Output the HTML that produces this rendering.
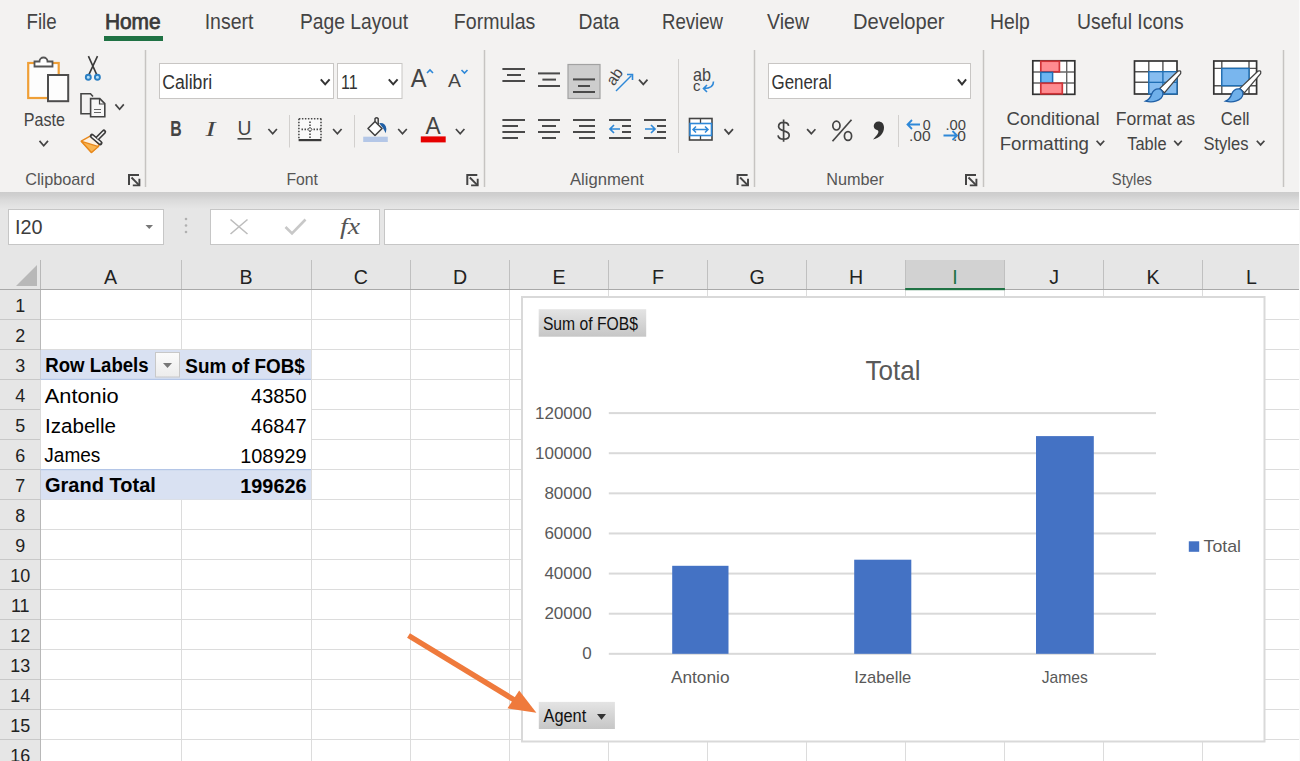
<!DOCTYPE html>
<html><head><meta charset="utf-8"><title>Excel</title>
<style>
*{margin:0;padding:0}
html,body{width:1300px;height:761px;overflow:hidden;background:#fff;font-family:"Liberation Sans",sans-serif;position:relative}

</style></head><body>
<svg width="1300" height="761" viewBox="0 0 1300 761" style="position:absolute;left:0;top:0;font-family:'Liberation Sans',sans-serif"><rect x="0" y="0" width="1300" height="192" fill="#f3f2f1"/>
<rect x="0" y="192" width="1300" height="68" fill="#e6e6e6"/>
<defs><linearGradient id="shd" x1="0" y1="0" x2="0" y2="1"><stop offset="0" stop-color="#cccccc"/><stop offset="0.2" stop-color="#d0d0d0"/><stop offset="0.5" stop-color="#dbdbdb"/><stop offset="0.8" stop-color="#e2e2e2"/><stop offset="1" stop-color="#e6e6e6"/></linearGradient></defs>
<rect x="0" y="192" width="1300" height="17" fill="url(#shd)"/>
<text x="26.50" y="29.00" font-size="21.80" font-weight="normal" fill="#444444" textLength="30.13" lengthAdjust="spacingAndGlyphs">File</text>
<text x="104.90" y="29.00" font-size="21.37" font-weight="normal" fill="#3a3a3a" textLength="55.75" lengthAdjust="spacingAndGlyphs" stroke="#3a3a3a" stroke-width="0.75">Home</text>
<text x="204.70" y="29.00" font-size="21.80" font-weight="normal" fill="#444444" textLength="48.72" lengthAdjust="spacingAndGlyphs">Insert</text>
<text x="300.00" y="29.00" font-size="21.80" font-weight="normal" fill="#444444" textLength="108.02" lengthAdjust="spacingAndGlyphs">Page Layout</text>
<text x="453.80" y="29.00" font-size="21.80" font-weight="normal" fill="#444444" textLength="81.55" lengthAdjust="spacingAndGlyphs">Formulas</text>
<text x="578.50" y="29.00" font-size="21.80" font-weight="normal" fill="#444444" textLength="40.85" lengthAdjust="spacingAndGlyphs">Data</text>
<text x="662.00" y="29.00" font-size="21.80" font-weight="normal" fill="#444444" textLength="60.98" lengthAdjust="spacingAndGlyphs">Review</text>
<text x="767.00" y="29.00" font-size="21.80" font-weight="normal" fill="#444444" textLength="41.99" lengthAdjust="spacingAndGlyphs">View</text>
<text x="853.00" y="29.00" font-size="21.80" font-weight="normal" fill="#444444" textLength="91.57" lengthAdjust="spacingAndGlyphs">Developer</text>
<text x="990.00" y="29.00" font-size="21.80" font-weight="normal" fill="#444444" textLength="39.83" lengthAdjust="spacingAndGlyphs">Help</text>
<text x="1077.00" y="29.00" font-size="21.80" font-weight="normal" fill="#444444" textLength="106.65" lengthAdjust="spacingAndGlyphs">Useful Icons</text>
<rect x="104" y="36" width="59" height="5" fill="#1f7244"/>
<text x="25.20" y="185.30" font-size="15.99" font-weight="normal" fill="#555" textLength="69.61" lengthAdjust="spacingAndGlyphs">Clipboard</text>
<text x="286.40" y="185.30" font-size="15.99" font-weight="normal" fill="#555" textLength="31.52" lengthAdjust="spacingAndGlyphs">Font</text>
<text x="570.00" y="185.30" font-size="15.99" font-weight="normal" fill="#555" textLength="73.93" lengthAdjust="spacingAndGlyphs">Alignment</text>
<text x="826.20" y="185.30" font-size="15.99" font-weight="normal" fill="#555" textLength="57.83" lengthAdjust="spacingAndGlyphs">Number</text>
<text x="1111.80" y="185.30" font-size="15.99" font-weight="normal" fill="#555" textLength="40.17" lengthAdjust="spacingAndGlyphs">Styles</text>
<line x1="145.5" y1="50" x2="145.5" y2="187" stroke="#c6c4c2" stroke-width="1.5"/>
<line x1="484.5" y1="50" x2="484.5" y2="187" stroke="#c6c4c2" stroke-width="1.5"/>
<line x1="754.5" y1="50" x2="754.5" y2="187" stroke="#c6c4c2" stroke-width="1.5"/>
<line x1="983.5" y1="50" x2="983.5" y2="187" stroke="#c6c4c2" stroke-width="1.5"/>
<line x1="1283.5" y1="50" x2="1283.5" y2="187" stroke="#c6c4c2" stroke-width="1.5"/>
<path d="M129.0 185.0 V175.0 H139.0" fill="none" stroke="#444" stroke-width="2"/><path d="M131.5 177.5 L139.3 185.3" stroke="#444" stroke-width="1.9"/><path d="M132.8 185.4 H139.4 V178.8" fill="none" stroke="#444" stroke-width="1.9"/>
<path d="M467.3 185.0 V175.0 H477.3" fill="none" stroke="#444" stroke-width="2"/><path d="M469.8 177.5 L477.6 185.3" stroke="#444" stroke-width="1.9"/><path d="M471.1 185.4 H477.7 V178.8" fill="none" stroke="#444" stroke-width="1.9"/>
<path d="M737.6 185.0 V175.0 H747.6" fill="none" stroke="#444" stroke-width="2"/><path d="M740.1 177.5 L747.9 185.3" stroke="#444" stroke-width="1.9"/><path d="M741.4 185.4 H748.0 V178.8" fill="none" stroke="#444" stroke-width="1.9"/>
<path d="M966.0 185.0 V175.0 H976.0" fill="none" stroke="#444" stroke-width="2"/><path d="M968.5 177.5 L976.3 185.3" stroke="#444" stroke-width="1.9"/><path d="M969.8 185.4 H976.4 V178.8" fill="none" stroke="#444" stroke-width="1.9"/>
<rect x="28.2" y="63" width="30.5" height="35" fill="#fdfdfd" stroke="#ef9f37" stroke-width="2.2"/>
<path d="M34.5 66.5 V61.5 H39.5 A4 4 0 0 1 47.5 61.5 H52.5 V66.5 Z" fill="#fff" stroke="#555" stroke-width="1.8"/>
<rect x="48" y="75" width="20.2" height="26.2" fill="#fdfdfd" stroke="#4d4d4d" stroke-width="2"/>
<text x="23.80" y="125.60" font-size="17.44" font-weight="normal" fill="#444" textLength="41.14" lengthAdjust="spacingAndGlyphs">Paste</text>
<path d="M39.5 140.9 L43.7 145.7 L48.0 140.9" fill="none" stroke="#444" stroke-width="1.7"/>
<path d="M88.4 56.2 L96.6 74.4 M97.5 56.2 L89 74.4" stroke="#3a3a3a" stroke-width="1.6" fill="none"/>
<circle cx="88.3" cy="77.3" r="2.5" fill="#b5e2fb" stroke="#2b7fc3" stroke-width="1.9"/>
<circle cx="97.4" cy="77.3" r="2.5" fill="#b5e2fb" stroke="#2b7fc3" stroke-width="1.9"/>
<path d="M90.5 113.8 H81 V93.8 H90.5 L93 96.5" fill="none" stroke="#444" stroke-width="1.6"/>
<path d="M90.6 98.6 H99.8 L104.8 103.6 V116.8 H90.6 Z" fill="#f7f7f7" stroke="#444" stroke-width="1.6"/>
<path d="M99.5 99 V104 H104.5" fill="none" stroke="#444" stroke-width="1.2"/>
<path d="M94 109.5 H101 M94 112.5 H101" stroke="#666" stroke-width="1"/>
<path d="M115.4 104.4 L119.6 109.2 L123.8 104.4" fill="none" stroke="#444" stroke-width="1.7"/>
<path d="M81.2 141.2 L91 135.6 L99.3 145 L91.4 152.6 Z" fill="#fdf1e2" stroke="#e8891c" stroke-width="1.4" stroke-linejoin="round"/>
<path d="M81.6 141.4 L98.6 146.6 L91.4 152.4 Z" fill="#f9b450" stroke="#e8891c" stroke-width="1.3" stroke-linejoin="round"/>
<path d="M92 135.9 L100.3 143.1 M97.6 138.2 L103.9 131.8" stroke="#3a3a3a" stroke-width="4.6" stroke-linecap="round"/>
<path d="M92.4 136.3 L99.9 142.7 M97.8 138 L103.7 132" stroke="#f6f6f6" stroke-width="1.6" stroke-linecap="round"/>
<rect x="159.5" y="63.5" width="174" height="35" fill="#fff" stroke="#c8c6c4"/>
<text x="162.20" y="89.30" font-size="20.35" font-weight="normal" fill="#333" textLength="49.98" lengthAdjust="spacingAndGlyphs">Calibri</text>
<path d="M320.8 79.3 L325.2 84.3 L329.6 79.3" fill="none" stroke="#333" stroke-width="2"/>
<rect x="337.5" y="63.5" width="64.5" height="35" fill="#fff" stroke="#c8c6c4"/>
<text x="340.90" y="89.30" font-size="20.35" font-weight="normal" fill="#333" textLength="16.67" lengthAdjust="spacingAndGlyphs">11</text>
<path d="M388.8 79.3 L393.2 84.3 L397.6 79.3" fill="none" stroke="#333" stroke-width="2"/>
<text x="410.70" y="86.70" font-size="25.73" font-weight="normal" fill="#444" textLength="15.83" lengthAdjust="spacingAndGlyphs">A</text>
<path d="M427 73 L430 70 L433 73" fill="none" stroke="#2e88d8" stroke-width="1.6"/>
<text x="448.00" y="86.70" font-size="18.46" font-weight="normal" fill="#444" textLength="12.94" lengthAdjust="spacingAndGlyphs">A</text>
<path d="M461.5 70 L464.5 73 L467.5 70" fill="none" stroke="#2e88d8" stroke-width="1.6"/>
<text x="170.30" y="136.20" font-size="21.37" font-weight="bold" fill="#444" textLength="11.43" lengthAdjust="spacingAndGlyphs">B</text>
<text x="205.5" y="136.2" style="font-family:'Liberation Serif';font-style:italic" font-size="21" fill="#444" textLength="10" lengthAdjust="spacingAndGlyphs">I</text>
<text x="237.60" y="135.20" font-size="20.35" font-weight="normal" fill="#444" textLength="13.94" lengthAdjust="spacingAndGlyphs">U</text>
<rect x="237.5" y="138" width="14" height="1.6" fill="#444"/>
<path d="M268.4 129.0 L272.7 133.8 L276.9 129.0" fill="none" stroke="#444" stroke-width="1.7"/>
<line x1="289.5" y1="115" x2="289.5" y2="147.5" stroke="#d2d0ce"/>
<rect x="299" y="119" width="22" height="20.5" fill="#fafafa"/>
<path d="M298.9 118.8 H321.5 M298.9 118.8 V139 M321 118.8 V139 M310 121.5 V139 M301.5 129.4 H321" stroke="#4a4a4a" stroke-width="1.6" stroke-dasharray="1.5 1.5" fill="none"/>
<path d="M310 127.4 L312 129.4 L310 131.4 L308 129.4 Z" fill="#fafafa" stroke="#555" stroke-width="1"/>
<rect x="298.6" y="139" width="22.8" height="2.2" fill="#3a3a3a"/>
<path d="M333.1 129.0 L337.4 133.8 L341.6 129.0" fill="none" stroke="#444" stroke-width="1.7"/>
<line x1="354.5" y1="115" x2="354.5" y2="147.5" stroke="#d2d0ce"/>
<path d="M375 121.5 L368 128.5 L375 135.5 L382 128.5 Z" fill="#fff" stroke="#444" stroke-width="1.6" stroke-linejoin="round"/>
<path d="M375 121.5 V118.8 Q376.6 116.6 378.2 118.8 V124.7" fill="none" stroke="#444" stroke-width="1.5"/>
<path d="M379.2 123.2 Q385.6 122.4 386.4 129 L385.8 133.2 Q384 130 382.6 127.6 Z" fill="#1f5fa5"/>
<rect x="363.2" y="136.7" width="24.6" height="5.3" fill="#b4c7e7"/>
<path d="M398.2 129.0 L402.5 133.8 L406.8 129.0" fill="none" stroke="#444" stroke-width="1.7"/>
<text x="425.40" y="134.20" font-size="24.71" font-weight="normal" fill="#444" textLength="15.13" lengthAdjust="spacingAndGlyphs">A</text>
<rect x="420.8" y="136.4" width="24.9" height="6" fill="#e60000"/>
<path d="M455.9 129.0 L460.2 133.8 L464.4 129.0" fill="none" stroke="#444" stroke-width="1.7"/>
<rect x="502.4" y="68.0" width="22.6" height="2.0" fill="#4a4a4a"/><rect x="507.0" y="74.0" width="14.0" height="2.0" fill="#4a4a4a"/><rect x="502.4" y="80.0" width="22.6" height="2.0" fill="#4a4a4a"/>
<rect x="538.0" y="72.4" width="22.0" height="2.0" fill="#4a4a4a"/><rect x="542.4" y="78.6" width="13.6" height="2.0" fill="#4a4a4a"/><rect x="538.0" y="85.0" width="22.0" height="2.0" fill="#4a4a4a"/>
<rect x="568" y="64.5" width="32" height="34" fill="#cdcdcd" stroke="#a2a2a2" stroke-width="1.2"/>
<rect x="573.0" y="78.4" width="22.0" height="2.0" fill="#4a4a4a"/><rect x="578.0" y="85.0" width="12.0" height="2.0" fill="#4a4a4a"/><rect x="573.0" y="91.0" width="22.0" height="2.0" fill="#4a4a4a"/>
<text x="0" y="0" font-size="15.5" fill="#444" transform="translate(614 86.5) rotate(-55)" textLength="17" lengthAdjust="spacingAndGlyphs">ab</text>
<path d="M616 91 L631.5 75.5" stroke="#2e88d8" stroke-width="1.5"/><path d="M627 74.5 H632.5 V80" fill="none" stroke="#2e88d8" stroke-width="1.6"/>
<path d="M639.0 79.6 L643.3 84.4 L647.5 79.6" fill="none" stroke="#444" stroke-width="1.7"/>
<line x1="678.5" y1="59" x2="678.5" y2="153" stroke="#d2d0ce"/>
<text x="693.00" y="80.50" font-size="17.44" font-weight="normal" fill="#444" textLength="18.04" lengthAdjust="spacingAndGlyphs">ab</text>
<text x="693.00" y="91.00" font-size="15.00" font-weight="normal" fill="#444" textLength="7.50" lengthAdjust="spacingAndGlyphs">c</text>
<path d="M713.5 81.5 Q713.5 88.5 704 88.5 M707 85 L703.5 88.5 L707 92" fill="none" stroke="#2e88d8" stroke-width="1.6"/>
<rect x="502.4" y="119.0" width="22.6" height="2.0" fill="#4a4a4a"/><rect x="502.4" y="125.0" width="15.6" height="2.0" fill="#4a4a4a"/><rect x="502.4" y="131.0" width="22.6" height="2.0" fill="#4a4a4a"/><rect x="502.4" y="137.0" width="15.6" height="2.0" fill="#4a4a4a"/>
<rect x="538.0" y="119.0" width="22.0" height="2.0" fill="#4a4a4a"/><rect x="542.0" y="125.0" width="14.0" height="2.0" fill="#4a4a4a"/><rect x="538.0" y="131.0" width="22.0" height="2.0" fill="#4a4a4a"/><rect x="542.0" y="137.0" width="14.0" height="2.0" fill="#4a4a4a"/>
<rect x="573.0" y="119.0" width="22.0" height="2.0" fill="#4a4a4a"/><rect x="579.0" y="125.0" width="16.0" height="2.0" fill="#4a4a4a"/><rect x="573.0" y="131.0" width="22.0" height="2.0" fill="#4a4a4a"/><rect x="579.0" y="137.0" width="16.0" height="2.0" fill="#4a4a4a"/>
<rect x="609.0" y="119.0" width="22.0" height="2.0" fill="#4a4a4a"/><rect x="622.0" y="125.0" width="9.0" height="2.0" fill="#4a4a4a"/><rect x="622.0" y="131.0" width="9.0" height="2.0" fill="#4a4a4a"/><rect x="609.0" y="137.0" width="22.0" height="2.0" fill="#4a4a4a"/>
<path d="M620 129 H610 M614 125 L610 129 L614 133" fill="none" stroke="#2e88d8" stroke-width="1.7"/>
<rect x="644.0" y="119.0" width="22.0" height="2.0" fill="#4a4a4a"/><rect x="657.0" y="125.0" width="9.0" height="2.0" fill="#4a4a4a"/><rect x="657.0" y="131.0" width="9.0" height="2.0" fill="#4a4a4a"/><rect x="644.0" y="137.0" width="22.0" height="2.0" fill="#4a4a4a"/>
<path d="M645 129 H655 M651 125 L655 129 L651 133" fill="none" stroke="#2e88d8" stroke-width="1.7"/>
<rect x="689.5" y="118.5" width="22.5" height="21.5" fill="#fff" stroke="#444" stroke-width="1.6"/>
<path d="M700.5 118.5 V123 M700.5 135.5 V140" stroke="#444" stroke-width="1.3"/>
<rect x="690" y="123.5" width="21.5" height="12" fill="#fff" stroke="#2e88d8" stroke-width="1.6"/>
<path d="M693 129.5 H708 M696 126.5 L693 129.5 L696 132.5 M705 126.5 L708 129.5 L705 132.5" fill="none" stroke="#2e88d8" stroke-width="1.5"/>
<path d="M724.5 129.1 L728.7 133.9 L733.0 129.1" fill="none" stroke="#444" stroke-width="1.7"/>
<rect x="768.5" y="63.5" width="202" height="35" fill="#fff" stroke="#c8c6c4"/>
<text x="771.50" y="88.60" font-size="19.33" font-weight="normal" fill="#333" textLength="60.16" lengthAdjust="spacingAndGlyphs">General</text>
<path d="M957.9 79.3 L962.0 84.3 L966.1 79.3" fill="none" stroke="#333" stroke-width="2"/>
<path d="M788.6 125.8 C788.3 123.5 786.3 122.4 783.6 122.4 C780.6 122.4 778.6 124 778.6 126.6 C778.6 132.2 789.2 129.6 789.2 135.2 C789.2 137.8 787.1 139.2 783.6 139.2 C780.5 139.2 778.4 138 778 135.4 M783.6 119.6 V141.8" fill="none" stroke="#444" stroke-width="1.7"/>
<path d="M807.1 129.2 L811.3 133.7 L815.4 129.2" fill="none" stroke="#444" stroke-width="1.7"/>
<ellipse cx="836.4" cy="125.6" rx="3.6" ry="4.4" fill="none" stroke="#444" stroke-width="1.7"/><ellipse cx="848" cy="136" rx="3.6" ry="4.4" fill="none" stroke="#444" stroke-width="1.7"/><path d="M832.5 141.3 L851.5 119.8" stroke="#444" stroke-width="1.7"/>
<path d="M878.5 121.5 C873 121.5 872 129 877 130 C879 130.5 879 133 876 136 L873 139.5 C880 138 884 133 884 127.5 C884 123.5 881.5 121.5 878.5 121.5 Z" fill="#333"/>
<line x1="898.5" y1="115" x2="898.5" y2="147" stroke="#d2d0ce"/>
<text x="922.80" y="129.50" font-size="15.26" font-weight="normal" fill="#444" textLength="7.92" lengthAdjust="spacingAndGlyphs">0</text>
<text x="909.00" y="141.20" font-size="15.26" font-weight="normal" fill="#444" textLength="21.70" lengthAdjust="spacingAndGlyphs">.00</text>
<path d="M920 124.5 H907.5 M912 120 L907.5 124.5 L912 129" fill="none" stroke="#2e88d8" stroke-width="1.8"/>
<text x="945.50" y="129.50" font-size="15.26" font-weight="normal" fill="#444" textLength="20.50" lengthAdjust="spacingAndGlyphs">.00</text>
<text x="953.00" y="141.20" font-size="15.26" font-weight="normal" fill="#444" textLength="12.98" lengthAdjust="spacingAndGlyphs">.0</text>
<path d="M943.5 135.5 H957 M952.5 131 L957 135.5 L952.5 140" fill="none" stroke="#2e88d8" stroke-width="1.8"/>
<rect x="1032.8" y="60.8" width="42" height="33.5" fill="#fff"/>
<path d="M1032.8 72 H1074.8 M1032.8 83 H1074.8 M1066.7 60.8 V94.3" stroke="#666" stroke-width="1.4" fill="none"/>
<rect x="1032.8" y="60.8" width="42" height="33.5" fill="none" stroke="#333" stroke-width="1.7"/>
<rect x="1040.8" y="61.2" width="18.6" height="10.6" fill="#ff8b90" stroke="#d13438" stroke-width="1.7"/>
<rect x="1040.8" y="72.3" width="11.8" height="10.4" fill="#6cb6f3" stroke="#1f6fb5" stroke-width="1.5"/>
<rect x="1040.8" y="83.2" width="21.5" height="10.6" fill="#ff8b90" stroke="#d13438" stroke-width="1.7"/>
<text x="1006.60" y="125.00" font-size="18.90" font-weight="normal" fill="#444" textLength="92.97" lengthAdjust="spacingAndGlyphs">Conditional</text>
<text x="999.70" y="149.50" font-size="18.90" font-weight="normal" fill="#444" textLength="89.29" lengthAdjust="spacingAndGlyphs">Formatting</text>
<path d="M1096.6 140.7 L1100.4 144.9 L1104.2 140.7" fill="none" stroke="#444" stroke-width="1.7"/>
<rect x="1134.5" y="61" width="42.5" height="33" fill="#fff"/>
<path d="M1134.5 71.7 H1177 M1134.5 82.3 H1177 M1148.8 61 V94 M1162.9 61 V94" stroke="#555" stroke-width="1.4" fill="none"/>
<rect x="1134.5" y="61" width="42.5" height="33" fill="none" stroke="#333" stroke-width="1.7"/>
<rect x="1148.8" y="71.7" width="28.2" height="22.3" fill="#79b6ee" fill-opacity="0.9"/>
<path d="M1148.8 71.7 H1177 V94 H1148.8 Z M1148.8 82.3 H1177 M1162.9 71.7 V94" fill="none" stroke="#1f6fb5" stroke-width="1.3"/>
<path d="M1177.8 71.2 Q1181.6 69.8 1180.6 73.6 L1164.4 92.8 L1159.6 88.6 Z" fill="#fff" stroke="#444" stroke-width="1.3" stroke-linejoin="round"/>
<path d="M1160.4 89 Q1165.2 93.5 1161.0 98.2 Q1155.0 103.4 1145.5 101.2 Q1150.0 99.2 1151.6 94.2 Q1154.0 87.8 1160.4 89 Z" fill="#6fb0ea" stroke="#1f5fa5" stroke-width="1.3"/>
<text x="1115.80" y="125.00" font-size="18.90" font-weight="normal" fill="#444" textLength="79.22" lengthAdjust="spacingAndGlyphs">Format as</text>
<text x="1127.30" y="149.50" font-size="18.90" font-weight="normal" fill="#444" textLength="39.21" lengthAdjust="spacingAndGlyphs">Table</text>
<path d="M1174.2 140.7 L1178.0 144.9 L1181.8 140.7" fill="none" stroke="#444" stroke-width="1.7"/>
<rect x="1213.8" y="61" width="42.8" height="33" fill="#fff"/>
<path d="M1213.8 68.4 H1256.6 M1213.8 85.7 H1256.6 M1221.8 61 V94 M1249 61 V94" stroke="#555" stroke-width="1.4" fill="none"/>
<rect x="1213.8" y="61" width="42.8" height="33" fill="none" stroke="#333" stroke-width="1.7"/>
<rect x="1221.8" y="68.4" width="27.2" height="17.3" fill="#79b6ee" stroke="#1f6fb5" stroke-width="1.4"/>
<path d="M1257.8 71.2 Q1261.6 69.8 1260.6 73.6 L1244.4 92.8 L1239.6 88.6 Z" fill="#fff" stroke="#444" stroke-width="1.3" stroke-linejoin="round"/>
<path d="M1240.4 89 Q1245.2 93.5 1241.0 98.2 Q1235.0 103.4 1225.5 101.2 Q1230.0 99.2 1231.6 94.2 Q1234.0 87.8 1240.4 89 Z" fill="#6fb0ea" stroke="#1f5fa5" stroke-width="1.3"/>
<text x="1220.80" y="125.00" font-size="18.90" font-weight="normal" fill="#444" textLength="28.76" lengthAdjust="spacingAndGlyphs">Cell</text>
<text x="1203.50" y="149.50" font-size="18.90" font-weight="normal" fill="#444" textLength="44.97" lengthAdjust="spacingAndGlyphs">Styles</text>
<path d="M1256.8 140.7 L1260.6 144.9 L1264.4 140.7" fill="none" stroke="#444" stroke-width="1.7"/>
<rect x="8.5" y="209.5" width="155" height="35" fill="#fff" stroke="#c6c6c6"/>
<text x="15.10" y="234.40" font-size="20.64" font-weight="normal" fill="#3c3c3c" textLength="27.50" lengthAdjust="spacingAndGlyphs">I20</text>
<path d="M145.5 225 H153 L149.25 229 Z" fill="#777"/>
<circle cx="186" cy="219" r="1.3" fill="#b0b0b0"/><circle cx="186" cy="225.5" r="1.3" fill="#b0b0b0"/><circle cx="186" cy="232" r="1.3" fill="#b0b0b0"/>
<rect x="210.5" y="209.5" width="169" height="35" fill="#fff" stroke="#c6c6c6"/>
<path d="M230.5 219.5 L247.5 234 M247.5 219.5 L230.5 234" stroke="#bdbdbd" stroke-width="1.6"/>
<path d="M285.5 227 L292 233.5 L305.5 219.5" fill="none" stroke="#c8c8c8" stroke-width="2.6"/>
<text x="340" y="234" style="font-family:'Liberation Serif';font-style:italic" font-size="23" fill="#555" textLength="20" lengthAdjust="spacingAndGlyphs">fx</text>
<rect x="384.5" y="209.5" width="930" height="35" fill="#fff" stroke="#c6c6c6"/>
<rect x="0" y="260" width="1300" height="30" fill="#e6e6e6"/>
<rect x="905.2" y="260" width="99.7" height="30" fill="#d2d2d2"/>
<rect x="0" y="290" width="40" height="471" fill="#e6e6e6"/>
<line x1="40" y1="319.5" x2="1300" y2="319.5" stroke="#dcdcdc"/>
<line x1="40" y1="349.5" x2="1300" y2="349.5" stroke="#dcdcdc"/>
<line x1="40" y1="379.5" x2="1300" y2="379.5" stroke="#dcdcdc"/>
<line x1="40" y1="409.5" x2="1300" y2="409.5" stroke="#dcdcdc"/>
<line x1="40" y1="439.5" x2="1300" y2="439.5" stroke="#dcdcdc"/>
<line x1="40" y1="469.5" x2="1300" y2="469.5" stroke="#dcdcdc"/>
<line x1="40" y1="499.5" x2="1300" y2="499.5" stroke="#dcdcdc"/>
<line x1="40" y1="529.5" x2="1300" y2="529.5" stroke="#dcdcdc"/>
<line x1="40" y1="559.5" x2="1300" y2="559.5" stroke="#dcdcdc"/>
<line x1="40" y1="589.5" x2="1300" y2="589.5" stroke="#dcdcdc"/>
<line x1="40" y1="619.5" x2="1300" y2="619.5" stroke="#dcdcdc"/>
<line x1="40" y1="649.5" x2="1300" y2="649.5" stroke="#dcdcdc"/>
<line x1="40" y1="679.5" x2="1300" y2="679.5" stroke="#dcdcdc"/>
<line x1="40" y1="709.5" x2="1300" y2="709.5" stroke="#dcdcdc"/>
<line x1="40" y1="739.5" x2="1300" y2="739.5" stroke="#dcdcdc"/>
<line x1="40" y1="769.5" x2="1300" y2="769.5" stroke="#dcdcdc"/>
<line x1="181.5" y1="290" x2="181.5" y2="761" stroke="#dcdcdc"/>
<line x1="311.5" y1="290" x2="311.5" y2="761" stroke="#dcdcdc"/>
<line x1="410.5" y1="290" x2="410.5" y2="761" stroke="#dcdcdc"/>
<line x1="509.5" y1="290" x2="509.5" y2="761" stroke="#dcdcdc"/>
<line x1="608.5" y1="290" x2="608.5" y2="761" stroke="#dcdcdc"/>
<line x1="707.5" y1="290" x2="707.5" y2="761" stroke="#dcdcdc"/>
<line x1="806.5" y1="290" x2="806.5" y2="761" stroke="#dcdcdc"/>
<line x1="905.5" y1="290" x2="905.5" y2="761" stroke="#dcdcdc"/>
<line x1="1004.5" y1="290" x2="1004.5" y2="761" stroke="#dcdcdc"/>
<line x1="1103.5" y1="290" x2="1103.5" y2="761" stroke="#dcdcdc"/>
<line x1="1202.5" y1="290" x2="1202.5" y2="761" stroke="#dcdcdc"/>
<line x1="0" y1="319.5" x2="40" y2="319.5" stroke="#c8c8c8"/>
<line x1="0" y1="349.5" x2="40" y2="349.5" stroke="#c8c8c8"/>
<line x1="0" y1="379.5" x2="40" y2="379.5" stroke="#c8c8c8"/>
<line x1="0" y1="409.5" x2="40" y2="409.5" stroke="#c8c8c8"/>
<line x1="0" y1="439.5" x2="40" y2="439.5" stroke="#c8c8c8"/>
<line x1="0" y1="469.5" x2="40" y2="469.5" stroke="#c8c8c8"/>
<line x1="0" y1="499.5" x2="40" y2="499.5" stroke="#c8c8c8"/>
<line x1="0" y1="529.5" x2="40" y2="529.5" stroke="#c8c8c8"/>
<line x1="0" y1="559.5" x2="40" y2="559.5" stroke="#c8c8c8"/>
<line x1="0" y1="589.5" x2="40" y2="589.5" stroke="#c8c8c8"/>
<line x1="0" y1="619.5" x2="40" y2="619.5" stroke="#c8c8c8"/>
<line x1="0" y1="649.5" x2="40" y2="649.5" stroke="#c8c8c8"/>
<line x1="0" y1="679.5" x2="40" y2="679.5" stroke="#c8c8c8"/>
<line x1="0" y1="709.5" x2="40" y2="709.5" stroke="#c8c8c8"/>
<line x1="0" y1="739.5" x2="40" y2="739.5" stroke="#c8c8c8"/>
<line x1="0" y1="769.5" x2="40" y2="769.5" stroke="#c8c8c8"/>
<line x1="40.5" y1="260" x2="40.5" y2="761" stroke="#b8b8b8"/>
<line x1="181.5" y1="260" x2="181.5" y2="289" stroke="#c0c0c0"/>
<line x1="311.5" y1="260" x2="311.5" y2="289" stroke="#c0c0c0"/>
<line x1="410.5" y1="260" x2="410.5" y2="289" stroke="#c0c0c0"/>
<line x1="509.5" y1="260" x2="509.5" y2="289" stroke="#c0c0c0"/>
<line x1="608.5" y1="260" x2="608.5" y2="289" stroke="#c0c0c0"/>
<line x1="707.5" y1="260" x2="707.5" y2="289" stroke="#c0c0c0"/>
<line x1="806.5" y1="260" x2="806.5" y2="289" stroke="#c0c0c0"/>
<line x1="905.5" y1="260" x2="905.5" y2="289" stroke="#c0c0c0"/>
<line x1="1004.5" y1="260" x2="1004.5" y2="289" stroke="#c0c0c0"/>
<line x1="1103.5" y1="260" x2="1103.5" y2="289" stroke="#c0c0c0"/>
<line x1="1202.5" y1="260" x2="1202.5" y2="289" stroke="#c0c0c0"/>
<rect x="0" y="289" width="1300" height="1" fill="#a9a9a9"/>
<rect x="905.2" y="288" width="99.7" height="2.2" fill="#1f7244"/>
<path d="M16 286 L37 265 V286 Z" fill="#b8b8b8"/>
<text x="103.93" y="284.30" font-size="21.08" font-weight="normal" fill="#222" textLength="13.07" lengthAdjust="spacingAndGlyphs">A</text>
<text x="239.48" y="284.30" font-size="21.08" font-weight="normal" fill="#222" textLength="13.07" lengthAdjust="spacingAndGlyphs">B</text>
<text x="353.69" y="284.30" font-size="21.08" font-weight="normal" fill="#222" textLength="14.16" lengthAdjust="spacingAndGlyphs">C</text>
<text x="452.94" y="284.30" font-size="21.08" font-weight="normal" fill="#222" textLength="14.16" lengthAdjust="spacingAndGlyphs">D</text>
<text x="552.53" y="284.30" font-size="21.08" font-weight="normal" fill="#222" textLength="13.07" lengthAdjust="spacingAndGlyphs">E</text>
<text x="652.12" y="284.30" font-size="21.08" font-weight="normal" fill="#222" textLength="11.97" lengthAdjust="spacingAndGlyphs">F</text>
<text x="749.51" y="284.30" font-size="21.08" font-weight="normal" fill="#222" textLength="15.25" lengthAdjust="spacingAndGlyphs">G</text>
<text x="848.89" y="284.30" font-size="21.08" font-weight="normal" fill="#222" textLength="14.16" lengthAdjust="spacingAndGlyphs">H</text>
<text x="952.31" y="284.30" font-size="21.08" font-weight="normal" fill="#1f7244" textLength="5.45" lengthAdjust="spacingAndGlyphs">I</text>
<text x="1049.30" y="284.30" font-size="21.08" font-weight="normal" fill="#222" textLength="9.80" lengthAdjust="spacingAndGlyphs">J</text>
<text x="1146.48" y="284.30" font-size="21.08" font-weight="normal" fill="#222" textLength="13.07" lengthAdjust="spacingAndGlyphs">K</text>
<text x="1246.06" y="284.30" font-size="21.08" font-weight="normal" fill="#222" textLength="10.90" lengthAdjust="spacingAndGlyphs">L</text>
<text x="15.32" y="312.30" font-size="18.90" font-weight="normal" fill="#222" textLength="9.98" lengthAdjust="spacingAndGlyphs">1</text>
<text x="15.32" y="342.30" font-size="18.90" font-weight="normal" fill="#222" textLength="9.98" lengthAdjust="spacingAndGlyphs">2</text>
<text x="15.32" y="372.30" font-size="18.90" font-weight="normal" fill="#222" textLength="9.98" lengthAdjust="spacingAndGlyphs">3</text>
<text x="15.32" y="402.30" font-size="18.90" font-weight="normal" fill="#222" textLength="9.98" lengthAdjust="spacingAndGlyphs">4</text>
<text x="15.32" y="432.30" font-size="18.90" font-weight="normal" fill="#222" textLength="9.98" lengthAdjust="spacingAndGlyphs">5</text>
<text x="15.32" y="462.30" font-size="18.90" font-weight="normal" fill="#222" textLength="9.98" lengthAdjust="spacingAndGlyphs">6</text>
<text x="15.32" y="492.30" font-size="18.90" font-weight="normal" fill="#222" textLength="9.98" lengthAdjust="spacingAndGlyphs">7</text>
<text x="15.32" y="522.30" font-size="18.90" font-weight="normal" fill="#222" textLength="9.98" lengthAdjust="spacingAndGlyphs">8</text>
<text x="15.32" y="552.30" font-size="18.90" font-weight="normal" fill="#222" textLength="9.98" lengthAdjust="spacingAndGlyphs">9</text>
<text x="10.34" y="582.30" font-size="18.90" font-weight="normal" fill="#222" textLength="19.97" lengthAdjust="spacingAndGlyphs">10</text>
<text x="10.97" y="612.30" font-size="18.90" font-weight="normal" fill="#222" textLength="18.63" lengthAdjust="spacingAndGlyphs">11</text>
<text x="10.34" y="642.30" font-size="18.90" font-weight="normal" fill="#222" textLength="19.97" lengthAdjust="spacingAndGlyphs">12</text>
<text x="10.34" y="672.30" font-size="18.90" font-weight="normal" fill="#222" textLength="19.97" lengthAdjust="spacingAndGlyphs">13</text>
<text x="10.34" y="702.30" font-size="18.90" font-weight="normal" fill="#222" textLength="19.97" lengthAdjust="spacingAndGlyphs">14</text>
<text x="10.34" y="732.30" font-size="18.90" font-weight="normal" fill="#222" textLength="19.97" lengthAdjust="spacingAndGlyphs">15</text>
<text x="10.34" y="762.30" font-size="18.90" font-weight="normal" fill="#222" textLength="19.97" lengthAdjust="spacingAndGlyphs">16</text>
<rect x="40.5" y="350" width="270.5" height="29.5" fill="#d9e1f2"/>
<rect x="40.5" y="379.5" width="270.5" height="90" fill="#fff"/>
<rect x="40.5" y="469.5" width="270.5" height="30" fill="#d9e1f2"/>
<rect x="40.5" y="378.8" width="270.5" height="1.2" fill="#b4c6e7"/>
<rect x="40.5" y="469" width="270.5" height="1.2" fill="#b4c6e7"/>
<defs><linearGradient id="btn" x1="0" y1="0" x2="0" y2="1"><stop offset="0" stop-color="#fbfbfb"/><stop offset="1" stop-color="#ececec"/></linearGradient><linearGradient id="pbtn" x1="0" y1="0" x2="0" y2="1"><stop offset="0" stop-color="#e4e4e4"/><stop offset="1" stop-color="#c6c6c6"/></linearGradient></defs>
<rect x="155.5" y="352.5" width="24" height="24.5" fill="url(#btn)" stroke="#c8c8c8"/>
<path d="M163 363 H172 L167.5 368 Z" fill="#777"/>
<text x="45.30" y="372.40" font-size="20.35" font-weight="bold" fill="#000" textLength="103.33" lengthAdjust="spacingAndGlyphs">Row Labels</text>
<text x="185.30" y="372.50" font-size="20.35" font-weight="bold" fill="#000" textLength="119.57" lengthAdjust="spacingAndGlyphs">Sum of FOB$</text>
<text x="44.70" y="402.80" font-size="21.08" font-weight="normal" fill="#000" textLength="74.04" lengthAdjust="spacingAndGlyphs">Antonio</text>
<text x="45.00" y="432.70" font-size="21.08" font-weight="normal" fill="#000" textLength="70.94" lengthAdjust="spacingAndGlyphs">Izabelle</text>
<text x="44.30" y="462.20" font-size="21.08" font-weight="normal" fill="#000" textLength="56.11" lengthAdjust="spacingAndGlyphs">James</text>
<text x="45.00" y="492.00" font-size="21.08" font-weight="bold" fill="#000" textLength="110.84" lengthAdjust="spacingAndGlyphs">Grand Total</text>
<text x="251.10" y="403.00" font-size="21.08" font-weight="normal" fill="#000" textLength="55.42" lengthAdjust="spacingAndGlyphs">43850</text>
<text x="251.10" y="433.00" font-size="21.08" font-weight="normal" fill="#000" textLength="55.42" lengthAdjust="spacingAndGlyphs">46847</text>
<text x="240.30" y="463.20" font-size="21.08" font-weight="normal" fill="#000" textLength="66.24" lengthAdjust="spacingAndGlyphs">108929</text>
<text x="240.30" y="492.70" font-size="21.08" font-weight="bold" fill="#000" textLength="66.24" lengthAdjust="spacingAndGlyphs">199626</text>
<rect x="522" y="297" width="742.5" height="444.5" fill="#fff" stroke="#d9d9d9" stroke-width="2"/>
<rect x="538.7" y="309.2" width="107.5" height="27.5" fill="url(#pbtn)"/>
<text x="542.90" y="329.80" font-size="18.60" font-weight="normal" fill="#111" textLength="95.06" lengthAdjust="spacingAndGlyphs">Sum of FOB$</text>
<text x="865.60" y="380.00" font-size="27.03" font-weight="normal" fill="#595959" textLength="55.06" lengthAdjust="spacingAndGlyphs">Total</text>
<rect x="608.8" y="412.10" width="547.2" height="2" fill="#d9d9d9"/>
<text x="534.97" y="418.50" font-size="16.28" font-weight="normal" fill="#595959" textLength="56.77" lengthAdjust="spacingAndGlyphs">120000</text>
<rect x="608.8" y="452.22" width="547.2" height="2" fill="#d9d9d9"/>
<text x="534.97" y="458.62" font-size="16.28" font-weight="normal" fill="#595959" textLength="56.77" lengthAdjust="spacingAndGlyphs">100000</text>
<rect x="608.8" y="492.34" width="547.2" height="2" fill="#d9d9d9"/>
<text x="544.41" y="498.74" font-size="16.28" font-weight="normal" fill="#595959" textLength="47.31" lengthAdjust="spacingAndGlyphs">80000</text>
<rect x="608.8" y="532.46" width="547.2" height="2" fill="#d9d9d9"/>
<text x="544.41" y="538.86" font-size="16.28" font-weight="normal" fill="#595959" textLength="47.31" lengthAdjust="spacingAndGlyphs">60000</text>
<rect x="608.8" y="572.58" width="547.2" height="2" fill="#d9d9d9"/>
<text x="544.41" y="578.98" font-size="16.28" font-weight="normal" fill="#595959" textLength="47.31" lengthAdjust="spacingAndGlyphs">40000</text>
<rect x="608.8" y="612.70" width="547.2" height="2" fill="#d9d9d9"/>
<text x="544.41" y="619.10" font-size="16.28" font-weight="normal" fill="#595959" textLength="47.31" lengthAdjust="spacingAndGlyphs">20000</text>
<rect x="608.8" y="652.82" width="547.2" height="2" fill="#d9d9d9"/>
<text x="582.26" y="659.22" font-size="16.28" font-weight="normal" fill="#595959" textLength="9.46" lengthAdjust="spacingAndGlyphs">0</text>
<rect x="672.2" y="565.8" width="56.3" height="88.0" fill="#4472c4"/>
<rect x="854.2" y="559.7" width="57.1" height="94.1" fill="#4472c4"/>
<rect x="1036.0" y="436.1" width="57.8" height="217.7" fill="#4472c4"/>
<text x="670.90" y="682.90" font-size="15.99" font-weight="normal" fill="#595959" textLength="58.63" lengthAdjust="spacingAndGlyphs">Antonio</text>
<text x="854.20" y="682.60" font-size="15.99" font-weight="normal" fill="#595959" textLength="57.13" lengthAdjust="spacingAndGlyphs">Izabelle</text>
<text x="1041.80" y="682.60" font-size="15.99" font-weight="normal" fill="#595959" textLength="46.11" lengthAdjust="spacingAndGlyphs">James</text>
<rect x="1188.8" y="541.3" width="10.4" height="10.5" fill="#4472c4"/>
<text x="1203.50" y="551.80" font-size="17.15" font-weight="normal" fill="#595959" textLength="37.54" lengthAdjust="spacingAndGlyphs">Total</text>
<rect x="538.8" y="701.9" width="76.1" height="27.1" fill="url(#pbtn)"/>
<text x="543.50" y="721.70" font-size="18.02" font-weight="normal" fill="#111" textLength="42.77" lengthAdjust="spacingAndGlyphs">Agent</text>
<path d="M597 714 H606 L601.5 719.8 Z" fill="#333"/>
<path d="M408.5 635.5 L516 701" stroke="#ef7a3c" stroke-width="5.5" stroke-linecap="butt"/>
<path d="M536.4 712.7 L519.2 690.4 L507.5 708.3 Z" fill="#ef7a3c"/>
<rect x="1299" y="0" width="1" height="761" fill="#fafafa"/></svg>
</body></html>
